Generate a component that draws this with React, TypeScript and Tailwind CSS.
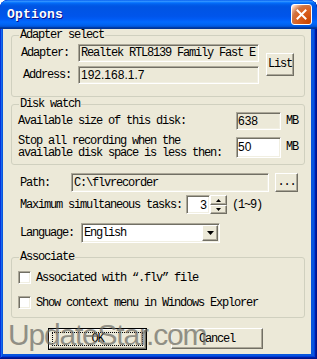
import React from "react";

const mono = "font-['Liberation_Mono',monospace] text-[12px] leading-[12px] tracking-[-1.2px] text-black";
const sans = "font-['Liberation_Sans',Arial,sans-serif] text-[12px] leading-[12px] text-black";

const sunken =
  "border border-t-[#ACA899] border-l-[#ACA899] border-b-white border-r-white shadow-[inset_1px_1px_0_#716F64,inset_-1px_-1px_0_#F1EFE2]";
const raised =
  "border border-t-white border-l-white border-b-[#716F64] border-r-[#716F64] shadow-[inset_-1px_-1px_0_#ACA899] bg-[#ECE9D8]";

function Group({ title, children, className }: { title: string; children: React.ReactNode; className: string }) {
  return (
    <div className={`relative ml-[8px] w-[294px] border border-[#D0D0BF] rounded-[3px] ${className}`}>
      <span className={`absolute left-[7px] top-[-7px] px-[1px] bg-[#ECE9D8] ${mono}`}>{title}</span>
      {children}
    </div>
  );
}

function Arrow({ down }: { down?: boolean }) {
  return (
    <svg width="5" height="3" viewBox="0 0 5 3">
      {down ? <path d="M0 0h5L2.5 3z" fill="#000" /> : <path d="M0 3h5L2.5 0z" fill="#000" />}
    </svg>
  );
}

export default function App() {
  return (
    <div className="w-[317px] h-[359px] bg-white">
      <div className="relative w-[317px] h-[359px] flex flex-col rounded-t-[8px] bg-[#0855DD] shadow-[inset_-1px_-1px_#00138c,inset_1px_1px_#0831d9,inset_-2px_-2px_#001ea0,inset_2px_2px_#166aee,inset_-3px_-3px_#003bda,inset_3px_3px_#0855dd] overflow-hidden">
        {/* Title bar */}
        <div className="h-[29px] shrink-0 flex items-center justify-between pl-[7px] pr-[5px] rounded-t-[8px] bg-[linear-gradient(180deg,#0058ee_0%,#3593ff_4%,#288eff_6%,#127dff_8%,#036ffc_10%,#0262ee_14%,#0057e5_20%,#0054e3_24%,#0055eb_56%,#005bf5_66%,#026afe_76%,#0062ef_86%,#0052d6_92%,#0040ab_94%,#003092_100%)]">
          <span className="font-['Liberation_Mono',monospace] font-bold text-[13px] leading-[14px] tracking-[0.2px] text-white [text-shadow:1px_1px_0_#0f1089]">
            Options
          </span>
          <div className="w-[21px] h-[21px] rounded-[3px] border border-white flex items-center justify-center bg-[radial-gradient(circle_at_90%_90%,#cc4600_0%,#dc6527_55%,#cd7546_70%,#ffccb2_90%,#fff_100%)]">
            <svg width="11" height="11" viewBox="0 0 11 11">
              <path d="M1.5 1.5L9.5 9.5M9.5 1.5L1.5 9.5" stroke="#fff" strokeWidth="2" strokeLinecap="square" />
            </svg>
          </div>
        </div>

        {/* Body */}
        <div className="ml-[3px] w-[308px] h-[325px] bg-[#ECE9D8] flex flex-col">
          {/* Adapter select */}
          <Group title="Adapter select" className="mt-[6px]">
            <div className="flex items-center pt-[8px] pb-[12px] pl-[9px]">
              <div className="flex flex-col gap-[4px]">
                <div className="flex items-center">
                  <span className={`w-[57px] ${mono}`}>Adapter:</span>
                  <div className={`w-[181px] h-[18px] flex items-center pl-[2px] overflow-hidden whitespace-nowrap bg-[#ECE9D8] ${sunken}`}>
                    <span className={mono}>Realtek RTL8139 Family Fast E</span>
                  </div>
                </div>
                <div className="flex items-center">
                  <span className={`w-[57px] pl-[2px] ${mono}`}>Address:</span>
                  <div className={`w-[181px] h-[18px] flex items-center pl-[2px] bg-[#ECE9D8] ${sunken}`}>
                    <span className={sans}>192.168.1.7</span>
                  </div>
                </div>
              </div>
              <div className={`ml-[7px] w-[28px] h-[23px] flex items-center justify-center ${raised}`}>
                <span className={mono}>List</span>
              </div>
            </div>
          </Group>

          {/* Disk watch */}
          <Group title="Disk watch" className="mt-[7px]">
            <div className="flex flex-col gap-[5px] pt-[7px] pb-[5px] pl-[6px]">
              <div className="flex items-center h-[18px]">
                <span className={`w-[218px] ${mono}`}>Available size of this disk:</span>
                <div className={`w-[45px] h-[18px] flex items-center pl-[1px] bg-[#ECE9D8] ${sunken}`}>
                  <span className={sans}>638</span>
                </div>
                <span className={`ml-[5px] ${mono}`}>MB</span>
              </div>
              <div className="flex items-center h-[24px]">
                <div className={`w-[218px] flex flex-col gap-[1px] font-['Liberation_Mono',monospace] text-[12px] leading-[11px] tracking-[-1.2px] text-black`}>
                  <span>Stop all recording when the</span>
                  <span>available disk space is less then:</span>
                </div>
                <div className={`w-[45px] h-[21px] flex items-center pl-[1px] bg-white ${sunken}`}>
                  <span className={sans}>50</span>
                </div>
                <span className={`ml-[5px] ${mono}`}>MB</span>
              </div>
            </div>
          </Group>

          {/* Path */}
          <div className="mt-[8px] pl-[17px] flex items-center h-[19px]">
            <span className={`w-[51px] ${mono}`}>Path:</span>
            <div className={`w-[198px] h-[19px] flex items-center pl-[2px] bg-[#ECE9D8] ${sunken}`}>
              <span className={mono}>C:\flvrecorder</span>
            </div>
            <div className={`ml-[6px] w-[23px] h-[19px] flex items-end justify-center pb-[3px] ${raised}`}>
              <span className={mono}>...</span>
            </div>
          </div>

          {/* Max tasks */}
          <div className="mt-[3px] pl-[17px] flex items-center h-[19px]">
            <span className={`w-[166px] ${mono}`}>Maximum simultaneous tasks:</span>
            <div className={`w-[24px] h-[19px] flex items-center justify-end pr-[2px] bg-white ${sunken}`}>
              <span className={sans}>3</span>
            </div>
            <div className="w-[17px] h-[19px] flex flex-col">
              <div className={`h-[10px] flex items-center justify-center ${raised}`}>
                <Arrow />
              </div>
              <div className={`h-[9px] flex items-center justify-center ${raised}`}>
                <Arrow down />
              </div>
            </div>
            <span className={`ml-[5px] ${mono}`}>(1~9)</span>
          </div>

          {/* Language */}
          <div className="mt-[9px] pl-[17px] flex items-center h-[20px]">
            <span className={`w-[61px] ${mono}`}>Language:</span>
            <div className={`w-[139px] h-[20px] flex items-center justify-between pl-[2px] pr-[1px] bg-white ${sunken}`}>
              <span className={mono}>English</span>
              <div className={`w-[16px] h-[16px] flex items-center justify-center ${raised}`}>
                <svg width="7" height="4" viewBox="0 0 7 4">
                  <path d="M0 0h7L3.5 4z" fill="#000" />
                </svg>
              </div>
            </div>
          </div>

          {/* Associate */}
          <Group title="Associate" className="mt-[14px]">
            <div className="flex flex-col gap-[12px] pt-[13px] pb-[8px] pl-[6px]">
              <div className="flex items-center h-[13px]">
                <div className={`w-[13px] h-[13px] bg-white ${sunken}`} />
                <span className={`ml-[5px] ${mono}`}>Associated with “.flv” file</span>
              </div>
              <div className="flex items-center h-[13px]">
                <div className={`w-[13px] h-[13px] bg-white ${sunken}`} />
                <span className={`ml-[5px] ${mono}`}>Show context menu in Windows Explorer</span>
              </div>
            </div>
          </Group>

          {/* Buttons */}
          <div className="mt-[10px] pl-[45px] flex items-start">
            <div className="w-[99px] h-[22px] border border-black flex">
              <div className={`flex-1 flex p-[2px] ${raised}`}>
                <div className="flex-1 border border-dotted border-black flex items-center justify-center">
                  <span className={mono}>OK</span>
                </div>
              </div>
            </div>
            <div className={`ml-[24px] w-[92px] h-[21px] flex items-center justify-center ${raised}`}>
              <span className={mono}>Cancel</span>
            </div>
          </div>
        </div>

        {/* Watermark */}
        <span className="absolute left-[8px] top-[320px] pointer-events-none font-['Liberation_Sans',Arial,sans-serif] text-[30px] leading-[30px] tracking-[-1.2px] text-[#6a6a62] opacity-70">
          UpdateStar.com
        </span>
      </div>
    </div>
  );
}
